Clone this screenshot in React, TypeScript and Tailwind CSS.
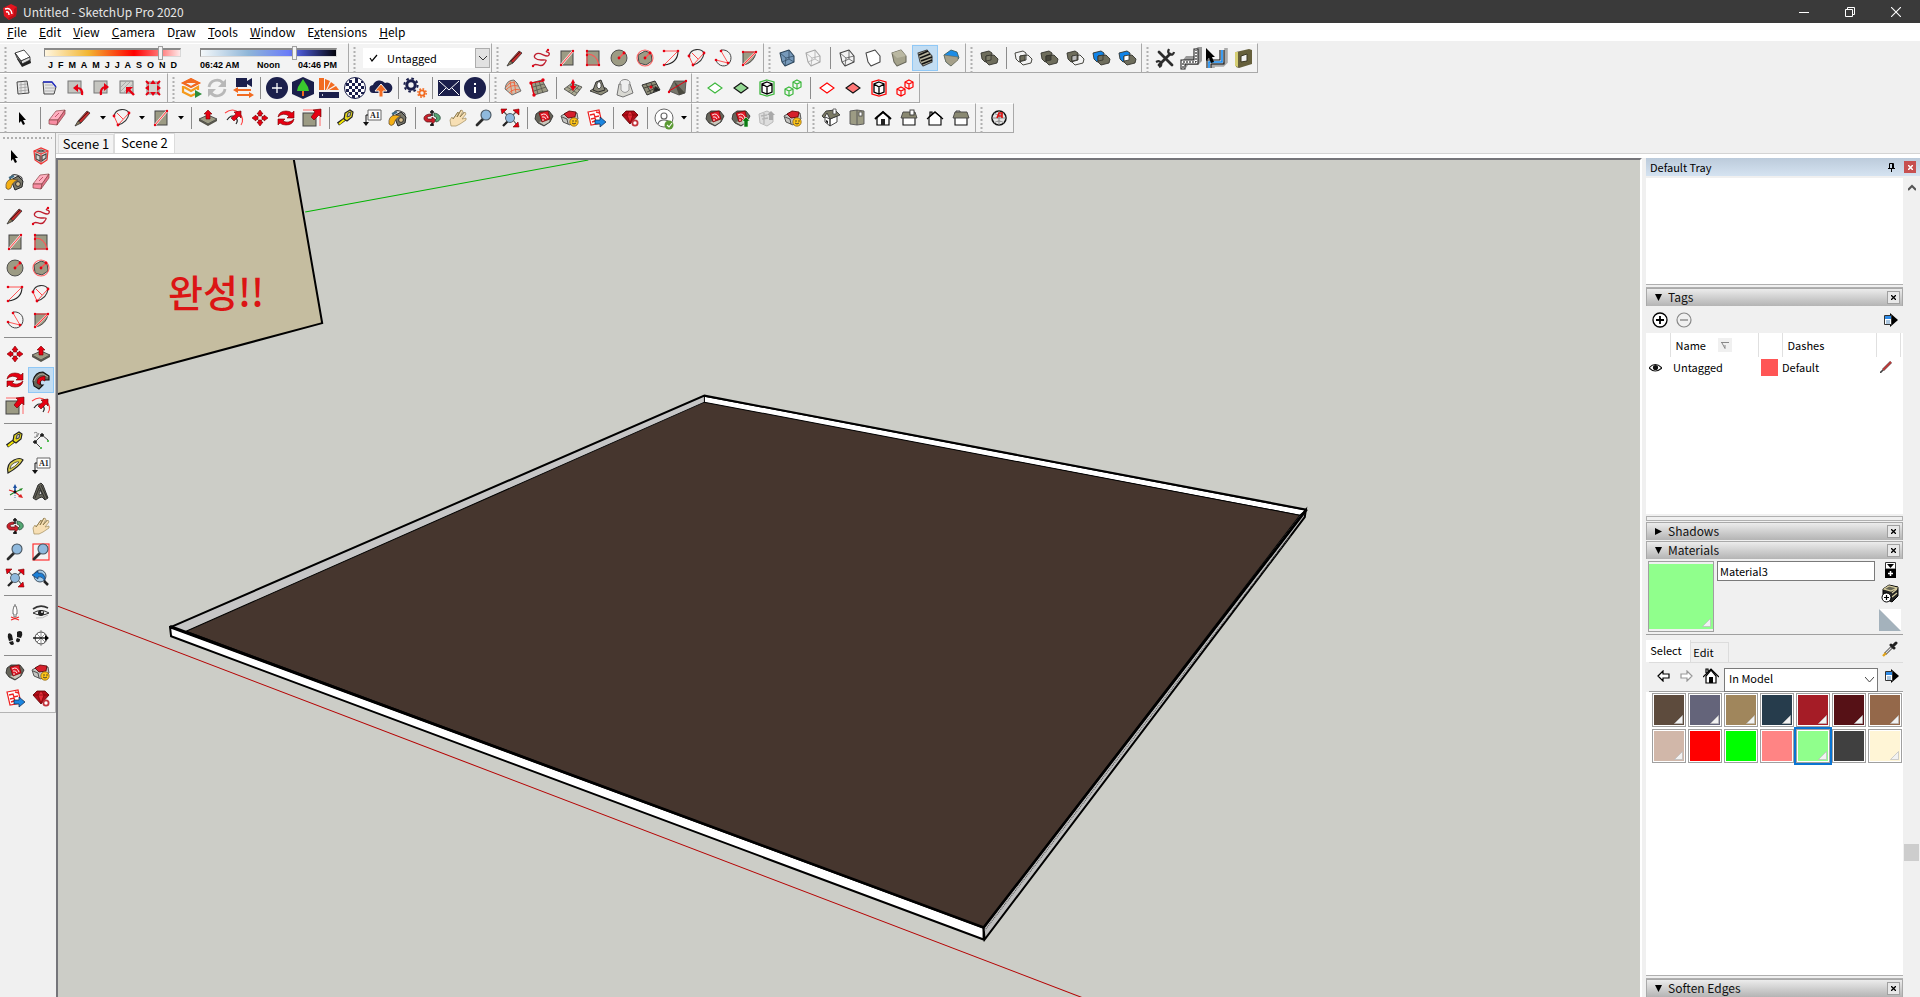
import React from 'react'

const TAUPE = '#9c9b84'
const DARK = '#33332c'
const RED = '#e60012'
const NAVY = '#1b1f4b'
const ORANGE = '#f26b21'

const dots = (points: number[][], r = 1.2) =>
  points.map(([x, y], index) => <circle key={index} cx={x} cy={y} r={r} fill={RED} />)

const styleCube = (fill: string, stroke: string, wire = false) => (
  <>
    <path d="M3 5 12 2 17 8 17 14 8 18 5 14Z" fill={fill} stroke={stroke} strokeWidth="1.1" strokeLinejoin="round" />
    {wire && <path d="M3 5 9 10 17 8M9 10 8 18M5 14 12 11 17 14M12 2 12 11" fill="none" stroke={stroke} strokeWidth="0.7" />}
  </>
)

const solids = (back: string, front: string, inner: string) => (
  <>
    <path d="M2 5 10 3 13 5 13 12 6 14 3 11Z" fill={back} stroke={DARK} strokeWidth="0.9" />
    <path d="M7 8 15 7 19 11 18 15 10 17 7 14Z" fill={front} stroke={DARK} strokeWidth="0.9" />
    <path d="M7 8 12 7 12 12 7 13Z" fill={inner} stroke={DARK} strokeWidth="0.8" />
  </>
)

const ringCube = (color: string) => (
  <>
    <path d="M10 2 17 4V16L10 18 3 16V4Z" fill="none" stroke={color} strokeWidth="1.3" />
    <path d="M10 4 15 6V14L10 16 5 14V6ZM5 6 10 9 15 6M10 9V16" fill="#fff" stroke="#000" strokeWidth="1.3" />
  </>
)

const twinCubes = (color: string) => (
  <g fill="none" stroke={color} strokeWidth="1.2">
    <path d="M6 9 10 11V16L6 18 2 16V11ZM2 11 6 13 10 11M6 13V18" />
    <path d="M14 2 18 4V9L14 11 10 9V4ZM10 4 14 6 18 4M14 6V11" />
  </g>
)

const warehouse = (
  <>
    <path d="M2 6 6 3 15 3 19 8 16 14 10 18 4 15 1 11Z" fill="#66655a" stroke="#222" strokeWidth="0.8" />
    <path d="M5 14 9 13 16 11 15 14 10 17Z" fill="#c9c8bd" />
    <path d="M5 5 14 3 16 11 8 14Z" fill="#e01b28" stroke="#700" strokeWidth="0.7" />
    <path d="M7 7Q12 4 14 10M8 9Q11 8 12 11M9 11V13" fill="none" stroke="#fff" strokeWidth="0.9" />
  </>
)

const components = (
  <>
    <path d="M1 8 6 5 17 5 18 11 10 17 3 14Z" fill="#c4c4c0" stroke="#333" strokeWidth="0.8" />
    <path d="M4 6 9 3 16 4 15 9 8 10Z" fill="#d6202c" stroke="#500" strokeWidth="0.8" />
    <path d="M2 9 7 11 8 16" fill="none" stroke="#333" strokeWidth="0.8" />
    <circle cx="14" cy="14" r="4.2" fill="#ffc61a" stroke="#805500" strokeWidth="0.7" />
    <path d="M12 15Q14 17 16 15" fill="none" stroke="#333" strokeWidth="0.9" />
    <circle cx="13" cy="13" r="0.7" fill="#222" />
    <circle cx="16" cy="13" r="0.7" fill="#222" />
  </>
)

const magnifier = (
  <>
    <path d="M9 11 3 17" stroke="#2b2b2b" strokeWidth="2.8" strokeLinecap="round" />
    <circle cx="12" cy="7" r="5" fill="#8fb9dd" stroke="#46535e" strokeWidth="1.1" />
  </>
)

const shed = (
  <path d="M4 10V17H16V10" fill="#fff" stroke="#111" strokeWidth="1.1" />
)

const icons: Record<string, React.ReactNode> = {
  shadow: (
    <>
      <path d="M4 11 9 19 18 15 17 10Z" fill="#222" />
      <path d="M2 5 11 2 17 9 8 13Z" fill="#fff" stroke="#333" strokeWidth="0.9" />
      <path d="M8 13 17 9V12L9 16Z" fill="#ddd" stroke="#222" strokeWidth="0.7" />
      <path d="M2 5 8 13 9 16 4 10Z" fill="#888" stroke="#222" strokeWidth="0.7" />
    </>
  ),
  select: <path d="M6 4V15L8 13 10 17 12 16 10 12H13Z" fill="#000" />,
  pencil: (
    <>
      <path d="M5 13 14 3 17 5 8 15Z" fill="#c42a2a" stroke="#333" strokeWidth="0.8" />
      <path d="M5 13 8 15 2 18Z" fill="#8d7b5a" stroke="#333" strokeWidth="0.8" />
      <path d="M6 13 15 4" stroke="#5a1212" strokeWidth="1" />
    </>
  ),
  freehand: (
    <>
      <path d="M2 18C5 13 9 21 13 16S15 12 10 12 1 9 5 6 16 11 18 7 12 5 17 2" fill="none" stroke="#bf1e2e" strokeWidth="1.4" />
      {dots([[2, 18], [17, 2]])}
    </>
  ),
  rectangle: (
    <>
      <rect x="4" y="3" width="12" height="14" fill={TAUPE} stroke="#444" />
      <path d="M4 17 16 3" stroke="#fff" strokeWidth="2.2" />
      <path d="M4 17 16 3" stroke="#f44" strokeWidth="1.1" />
      {dots([[4, 17], [16, 3]])}
    </>
  ),
  rotated: (
    <>
      <rect x="4" y="3" width="12" height="14" fill={TAUPE} stroke="#444" />
      <path d="M4 3V17H16M4 6Q14 6 16 17" fill="none" stroke="#f55" strokeWidth="1.2" />
      {dots([[4, 3], [4, 7], [4, 17], [16, 17]])}
    </>
  ),
  circle: (
    <>
      <circle cx="10" cy="10" r="8" fill={TAUPE} stroke="#444" strokeWidth="0.9" />
      <path d="M10 10 15 5" stroke="#f55" strokeWidth="1.6" />
      {dots([[10, 10], [15, 5]], 1.4)}
    </>
  ),
  polygon: (
    <>
      <path d="M3 7 10 3 16 5 17 13 11 17 4 15Z" fill={TAUPE} stroke="#444" />
      <circle cx="10" cy="10" r="8" fill="none" stroke="#f66" strokeWidth="1.1" />
      <path d="M10 10 15 5" stroke="#f55" strokeWidth="1.4" />
      {dots([[10, 10], [15, 5]], 1.4)}
    </>
  ),
  arc2: (
    <>
      <path d="M17 3C17 11 12 16 3 17" fill="none" stroke="#222" strokeWidth="1.1" />
      <path d="M3 3H17L3 17" fill="none" stroke="#f55" strokeWidth="1" />
      {dots([[3, 3], [17, 3], [3, 17]], 1.3)}
    </>
  ),
  arc: (
    <>
      <path d="M2 8C4 0 14 0 17 5M17 5Q16 14 6 17" fill="none" stroke="#333" strokeWidth="1.1" />
      <path d="M2 8 6 17 17 5M5 5 11 11" fill="none" stroke="#f44" strokeWidth="1" />
      {dots([[2, 8], [6, 17], [17, 5]], 1.4)}
    </>
  ),
  arc3: (
    <>
      <path d="M8 2C16 1 20 8 17 14S5 19 3 12" fill="none" stroke="#444" strokeWidth="1" />
      <path d="M8 3 15 15 3 12" fill="none" stroke="#f44" strokeWidth="0.9" />
      {dots([[8, 3], [3, 12], [15, 15]], 1.3)}
    </>
  ),
  pie: (
    <>
      <path d="M4 4H17C16 11 11 16 4 17Z" fill={TAUPE} stroke="#444" />
      <path d="M4 17 17 4" stroke="#fff" strokeWidth="2.2" />
      <path d="M4 4H17L4 17" fill="none" stroke="#f44" strokeWidth="1.1" />
      {dots([[4, 4], [17, 4], [4, 17]])}
    </>
  ),
  xray: styleCube('#7699ba', '#2b4459', true),
  backedges: styleCube('#f4f4f4', '#a5a5a5', true),
  wireframe: styleCube('none', '#444', true),
  hidden: styleCube('#fff', '#444'),
  shaded: (
    <>
      {styleCube('#a5a38c', '#6a695c')}
      <path d="M3 5 12 2 17 8 8 10Z" fill="#bab8a2" />
    </>
  ),
  textured: (
    <>
      {styleCube('#b5b29c', '#444')}
      <path d="M4 7 13 3M5 10 15 6M6 13 17 9M7 16 17 12" stroke="#111" strokeWidth="1.6" />
    </>
  ),
  monochrome: (
    <>
      <path d="M3 7 10 2 16 4 18 10 10 18 5 14Z" fill="#1b8ce6" stroke="#355" strokeWidth="0.8" />
      <path d="M3 7 17 9 17 12 10 18 5 14Z" fill="#a5a08a" stroke="#665" strokeWidth="0.6" />
    </>
  ),
  outerShell: solids('#6e6d5c', '#6e6d5c', '#7c7b68'),
  intersect: solids('none', 'none', '#6e6d5c'),
  union: solids('#6e6d5c', '#6e6d5c', '#46453a'),
  subtract: solids('#6e6d5c', 'none', '#bbb'),
  trim: solids('#1184e8', '#6e6d5c', '#6e6d5c'),
  split: solids('#1184e8', '#6e6d5c', '#fff'),
  wrench: (
    <>
      <path d="M4 4 17 17M4 17 15 6" stroke="#2c2c2c" strokeWidth="2.8" strokeLinecap="round" />
      <path d="M14 1Q12 5 15 6 18 8 19 4M1 14Q5 12 6 15 7 18 4 19" fill="none" stroke="#2c2c2c" strokeWidth="2.2" />
    </>
  ),
  road: (
    <>
      <path d="M2 12 5 8H13V2L17-1H21V13L17 17H7L5 20Z" fill="#999" />
      <path d="M0 21V12H13V1H17V16H4V21Z" fill="#fff" stroke="#222" strokeWidth="1.1" />
      <path d="M2 20V14H15V2" fill="none" stroke="#000" strokeDasharray="2 1" />
    </>
  ),
  pathCursor: (
    <>
      <path d="M19 0V14L16 17H6V20" fill="none" stroke="#aaa" strokeWidth="3.6" />
      <path d="M0 20V12H13V2M4 20V16H17V2" fill="none" stroke="#111" strokeWidth="1.1" />
      <path d="M2 20V14H15V2" fill="none" stroke="#1188f0" strokeWidth="1.6" />
      <path d="M-1 0V13L2 10 4 15 7 14 5 9H8Z" fill="#000" />
    </>
  ),
  frame: (
    <>
      <path d="M3 4 16 1 19 2V16L6 20 3 19Z" fill="#66603c" />
      <path d="M2 4 5 4V19L2 18Z" fill="#d6cf75" />
      <path d="M8 8 14 6V13L8 14Z" fill="#f3f3f3" stroke="#3a3722" />
    </>
  ),
  sheet: (
    <>
      <path d="M4 4 14 3 16 15 5 16Z" fill="#e6e6e6" stroke="#444" />
      <path d="M6 7 14 6M6 10 15 9M6 13 15 12M8 4V16M12 4V15" stroke="#999" strokeWidth="0.7" />
    </>
  ),
  sheetBlue: (
    <>
      <path d="M4 4H13L17 9 15 16 5 16Z" fill="#e6e6e6" stroke="#444" />
      <path d="M4 4H13L17 9" fill="none" stroke="#2630c8" strokeWidth="1.3" />
      <path d="M6 7H14M6 10H16M6 13H15" stroke="#999" strokeWidth="0.7" />
    </>
  ),
  turnLeft: (
    <>
      <rect x="3" y="3" width="13" height="12" fill="#c5c5c0" stroke="#777" />
      <path d="M17 17Q18 10 12 10" fill="none" stroke={RED} strokeWidth="2.2" />
      <path d="M13 6V14L8 10Z" fill={RED} />
    </>
  ),
  turnRight: (
    <>
      <rect x="3" y="3" width="13" height="12" fill="#c5c5c0" stroke="#777" />
      <path d="M10 17Q9 10 14 9" fill="none" stroke={RED} strokeWidth="2.2" />
      <path d="M13 5V13L18 9Z" fill={RED} />
    </>
  ),
  cornerArrow: (
    <>
      <rect x="3" y="3" width="13" height="12" fill="#d5d5d0" stroke="#777" />
      <path d="M4 13 13 4M6 15 16 6M4 9 9 4" stroke="#aaa" />
      <path d="M17 17 12 12" stroke={RED} strokeWidth="2.4" />
      <path d="M9 9H16L9 16Z" fill={RED} />
    </>
  ),
  spread: (
    <>
      <rect x="4" y="4" width="12" height="12" fill="#d0d0cb" stroke="#888" />
      <path d="M10 2 13 6H7ZM10 18 7 14H13ZM2 10 6 7V13ZM18 10 14 7V13Z" fill={RED} />
      <path d="M3 3 6 6M17 3 14 6M3 17 6 14M17 17 14 14" stroke={RED} strokeWidth="2" />
    </>
  ),
  academy: (
    <>
      <path d="M10 0 20 5 10 10 0 5ZM5 5H15L10 8Z" fill={ORANGE} fillRule="evenodd" />
      <path d="M10 1 18 5 10 9 2 5Z" fill="none" stroke={ORANGE} strokeWidth="1.6" />
      <path d="M2 8V14L10 18 14 16M3 9 10 13 17 9V12" fill="none" stroke="#f49a1c" strokeWidth="2.2" />
      <path d="M14 12 21 16 14 20Z" fill="#2c8c3a" />
    </>
  ),
  refresh: (
    <>
      <path d="M2 9A8 8 0 0 1 16 5M18 11A8 8 0 0 1 4 15" fill="none" stroke="#b8b8b8" strokeWidth="2.8" />
      <path d="M19 1V9H11ZM1 19V11H9Z" fill="#b8b8b8" />
    </>
  ),
  camera: (
    <>
      <path d="M3 0H14V3L19 0V9L14 6V9H3Z" fill={NAVY} />
      <path d="M0 12 5 9V11H18V13H5V15ZM21 17 16 14V16H4V18H16V20Z" fill={ORANGE} />
    </>
  ),
  plus: (
    <>
      <circle cx="10" cy="10" r="11" fill={NAVY} />
      <path d="M10 5V15M5 10H15" stroke="#fff" strokeWidth="1.3" />
    </>
  ),
  tree: (
    <>
      <path d="M10-1 21 4V16L10 21-1 16V4Z" fill={NAVY} />
      <path d="M10 1 15 9 16 13H4L5 9Z" fill="#3ac92d" />
      <path d="M9 13H11V18H9Z" fill={ORANGE} />
    </>
  ),
  palette: (
    <>
      <path d="M0 0H5V12H0ZM6 1 11 3 7 12H6ZM12 4 16 7 8 12ZM17 8 20 12H10Z" fill={ORANGE} />
      <path d="M0 14H20V20H0Z" fill={NAVY} />
      <path d="M3 17H4" stroke="#fff" strokeWidth="1.5" />
    </>
  ),
  globe: (
    <>
      <circle cx="10" cy="10" r="10.5" fill="#fff" stroke={NAVY} />
      <path d="M4 2H7V5H4ZM10 0H13V2H10ZM7 5H10V8H7ZM13 5H16V8H13ZM10 2H13V5H10ZM1 5H4V8H1ZM4 8H7V11H4ZM10 8H13V11H10ZM16 8H19V11H16ZM1 11H4V14H1ZM7 11H10V14H7ZM13 11H16V14H13ZM4 14H7V17H4ZM10 14H13V17H10ZM16 14H19V16H16ZM7 17H10V20H7ZM13 17H15V19H13ZM16 3H18V5H16Z" fill={NAVY} />
    </>
  ),
  cloud: (
    <>
      <path d="M3 15A4 4 0 0 1 2 7 7 7 0 0 1 14 5 5 5 0 0 1 18 15Z" fill={NAVY} />
      <path d="M10 6 16 13H12V19H8V13H4Z" fill={ORANGE} stroke="#f3f3f3" />
    </>
  ),
  gears: (
    <>
      <circle cx="6" cy="7" r="4.2" fill="none" stroke={NAVY} strokeWidth="3" />
      <circle cx="6" cy="7" r="6.6" fill="none" stroke={NAVY} strokeWidth="2" strokeDasharray="2.6 2.6" />
      <circle cx="17" cy="15" r="2.6" fill="none" stroke={ORANGE} strokeWidth="1.8" />
      <circle cx="17" cy="15" r="4.2" fill="none" stroke={ORANGE} strokeWidth="1.5" strokeDasharray="1.7 1.6" />
    </>
  ),
  mail: (
    <>
      <path d="M-1 2H21V18H-1Z" fill={NAVY} />
      <path d="M0 3 10 12 20 3M0 17 7 10M20 17 13 10" fill="none" stroke="#fff" strokeWidth="1" />
    </>
  ),
  info: (
    <>
      <circle cx="10" cy="10" r="11" fill={NAVY} />
      <path d="M10 9V15M10 5V7" stroke="#fff" strokeWidth="2" />
    </>
  ),
  contours: (
    <>
      <path d="M2 11Q3 2 11 2L14 5 18 13 9 17Z" fill="#cfc0ae" stroke="#555" strokeWidth="0.8" />
      <path d="M3 9Q7 3 12 5M3 12Q8 6 15 8M6 15Q11 10 17 12M7 3 9 16M11 3 13 15" fill="none" stroke="#f0613a" strokeWidth="0.9" />
    </>
  ),
  scratch: (
    <>
      <path d="M2 5 13 2 19 13 5 17Z" fill={TAUPE} stroke="#444" strokeWidth="0.8" />
      <path d="M4 9 15 6M5 13 17 9M6 4 9 16M10 3 14 15" stroke="#55544a" strokeWidth="0.8" />
      <path d="M5 17 2 5 14 3" fill="none" stroke={RED} strokeWidth="1.2" />
      {dots([[2, 5], [14, 2], [5, 17]], 1.7)}
    </>
  ),
  smoove: (
    <>
      <path d="M1 11 9 5 19 9 12 18Z" fill="#aaa992" stroke="#444" strokeWidth="0.8" />
      <path d="M4 9 14 15M7 7 17 12M5 14 14 7M8 16 16 8" stroke="#55544a" strokeWidth="0.7" />
      <path d="M10 1 12 5H11V8H13L10 13 7 8H9V5H8Z" fill={RED} />
    </>
  ),
  stamp: (
    <>
      <path d="M1 13 7 9 17 10 19 13 12 17Z" fill="#8e8d79" stroke="#222" strokeWidth="0.8" />
      <path d="M4 12 7 4 12 2 16 12 9 14Z" fill="#8a897a" stroke="#222" strokeWidth="0.9" />
      <path d="M8 9V6L10 3 12 6V9L10 11Z" fill="#fff" stroke="#222" strokeWidth="0.7" />
    </>
  ),
  drape: (
    <>
      <path d="M2 17 4 6H15L18 15 8 19Z" fill="#d8d8d2" stroke="#666" strokeWidth="0.9" />
      <ellipse cx="10" cy="5" rx="5" ry="3.5" fill="#eee" stroke="#888" />
      <path d="M6 6 6 12Q10 17 14 12V6" fill="#eee" stroke="#999" />
    </>
  ),
  detail: (
    <>
      <path d="M1 7 14 3 19 12 6 17Z" fill="#8e8d79" stroke="#222" strokeWidth="0.9" />
      <path d="M14 8 19 12 12 14Z" fill="#222" />
      <path d="M5 6 10 15M3 10 16 6M6 14 17 9M10 5 14 13" stroke="#33332c" strokeWidth="0.8" />
      {dots([[10, 9]], 1.5)}
    </>
  ),
  flip: (
    <>
      <path d="M2 13 7 3 19 3 18 15 12 17Z" fill="#77766a" stroke="#444" strokeWidth="0.8" />
      <path d="M7 3 18 15 12 17Z" fill="#4b4a40" />
      <path d="M2 13 19 3" stroke={RED} strokeWidth="1" />
      {dots([[2, 14], [19, 3]])}
    </>
  ),
  greenOpen: <path d="M3 10 10 5 17 10 10 15Z" fill="#fff" stroke="#3cb83c" strokeWidth="1.1" />,
  greenFill: <path d="M3 10 10 5 17 10 10 15Z" fill="#93d893" stroke="#111" strokeWidth="1.1" />,
  greenCube: ringCube('#3cb83c'),
  greenTwin: twinCubes('#3cb83c'),
  redOpen: <path d="M3 10 10 5 17 10 10 15Z" fill="#fff" stroke="#f00" strokeWidth="1.1" />,
  redFill: <path d="M3 10 10 5 17 10 10 15Z" fill="#f77" stroke="#111" strokeWidth="1.1" />,
  redCube: ringCube('#f00'),
  redTwin: twinCubes('#f00'),
  eraser: (
    <>
      <path d="M2 12 9 3 18 2 11 12Z" fill="#ffb0c0" stroke="#844" strokeWidth="0.7" />
      <path d="M2 12 11 12 10 17 2 16Z" fill="#f88da3" stroke="#844" strokeWidth="0.7" />
      <path d="M11 12 18 2 18 6 10 17Z" fill="#e57189" stroke="#844" strokeWidth="0.7" />
      <path d="M8 9 12 5" stroke="#c0566d" />
    </>
  ),
  pushpull: (
    <>
      <path d="M1 11 10 7 19 11 10 16Z" fill={TAUPE} stroke="#333" strokeWidth="0.8" />
      <path d="M1 11V13L10 18 19 13V11L10 16Z" fill="#55544a" />
      <path d="M10 2 14 6H12V11H8V6H6Z" fill={RED} stroke="#700" strokeWidth="0.6" />
    </>
  ),
  offset: (
    <>
      <path d="M1 5Q9-1 15 5T17 17" fill="none" stroke="#f44" strokeWidth="1.1" />
      <path d="M3 12Q7 6 11 9T12 16" fill="none" stroke="#222" strokeWidth="1.2" />
      <path d="M17 3V10L15 8 10 13 7 10 12 6 10 4Z" fill={RED} stroke="#600" strokeWidth="0.6" />
    </>
  ),
  move: (
    <path d="M10 2 13 6H11.5V8H8.5V6H7ZM10 18 7 14H8.5V12H11.5V14H13ZM2 10 6 7V8.5H8V11.5H6V13ZM18 10 14 13V11.5H12V8.5H14V7Z" fill={RED} stroke="#700" strokeWidth="0.6" />
  ),
  rotate: (
    <g fill={RED} stroke="#700" strokeWidth="0.6">
      <path d="M2 9Q3 3 10 3 14 3 16 5L18 3V10H11L13 8Q7 4 2 9Z" />
      <path d="M18 11Q17 17 10 17 6 17 4 15L2 17V11H9L7 13Q13 16 18 11Z" />
    </g>
  ),
  scale: (
    <>
      <path d="M1 2H18V18" fill="none" stroke="#f66" />
      <rect x="1" y="5" width="13" height="13" fill={TAUPE} stroke="#444" />
      <path d="M19 1V9L17 7 12 12 9 9 13 4 11 2Z" fill={RED} stroke="#600" strokeWidth="0.6" />
    </>
  ),
  follow: (
    <>
      <path d="M2 11Q4 2 12 2L18 6 18 10 14 10 11 9Q8 11 10 15L12 15 8 19 3 16Z" fill="#66655a" stroke="#111" strokeWidth="1.1" />
      <path d="M3 11Q6 4 12 4L17 7" fill="none" stroke="#b9b8a8" strokeWidth="0.9" />
      <path d="M14 6V11L11 10Q8 12 9 15L6 13Q6 8 10 7Z" fill={RED} stroke="#600" strokeWidth="0.6" />
    </>
  ),
  tape: (
    <>
      <path d="M2 16 9 11" stroke="#222" strokeWidth="3.6" />
      <path d="M3 16 9 11" stroke="#f2e500" strokeWidth="2" />
      <path d="M8 11 9 5 14 2 17 4 16 9 11 13Z" fill="#e7d91a" stroke="#222" strokeWidth="1.2" />
      <path d="M11 9 12 5 15 4 14 8Z" fill="#bbb" stroke="#444" />
    </>
  ),
  label: (
    <>
      <path d="M6 2H19V12H6Z" fill="#fff" stroke="#666" />
      <path d="M6 7H4V15" fill="none" stroke="#111" />
      <path d="M1 14H7L4 18Z" fill="#111" />
      <text x="8" y="10" fontSize="8" fontFamily="Liberation Serif, serif" fontWeight="bold" fill="#222">A1</text>
    </>
  ),
  paint: (
    <>
      <path d="M6 8 13 4 18 9 17 15 10 18Z" fill="#77766a" stroke="#222" strokeWidth="1" />
      <path d="M5 8Q6 1 12 3T17 8" fill="none" stroke="#444" strokeWidth="1.2" />
      <path d="M1 16Q0 8 7 7L13 8Q7 10 6 16Q3 19 1 16Z" fill="#f5b014" stroke="#543" strokeWidth="0.7" />
      <circle cx="13" cy="12" r="2.4" fill="#d9c08f" stroke="#222" strokeWidth="0.9" />
      <path d="M4 6 9 4" stroke="#3f6b84" strokeWidth="2.3" />
    </>
  ),
  orbit: (
    <>
      <path d="M9 6C1 6 0 12 5 14H10V17L14 12 10 9V11H6Q3 9 9 8Z" fill="#c9202b" stroke="#511" strokeWidth="0.7" />
      <path d="M12 5C20 6 20 13 14 14L13 12Q17 10 12 8Z" fill="#54a873" stroke="#243" strokeWidth="0.8" />
      <path d="M10 2V8M10 15V18M8 4H12M8 17H12" stroke="#111" strokeWidth="1.5" />
    </>
  ),
  hand: (
    <>
      <path d="M3 18 2 12 4 9 5 11 10 4 11 5 9 9 13 2 15 3 12 9 17 4 18 6 14 11 18 10V12L12 16 8 18Z" fill="#f7dfb4" stroke="#a08c5c" strokeWidth="0.7" />
      <path d="M5 11 10 4M9 9 13 2M12 9 16 4" fill="none" stroke="#7c6a3c" strokeWidth="0.7" />
    </>
  ),
  zoom: magnifier,
  zoomWindow: (
    <>
      <rect x="2" y="2" width="16" height="16" fill="none" stroke="#f33" strokeWidth="1.2" />
      {magnifier}
    </>
  ),
  extents: (
    <>
      <path d="M13 12 17 17M7 7 3 3M13 7 17 3" stroke="#555" strokeWidth="1.2" />
      <path d="M8 13 3 18" stroke="#222" strokeWidth="2.3" />
      <circle cx="10" cy="10" r="4.5" fill="#8fb9dd" stroke="#56636e" />
      <path d="M1 1H7L2 6ZM19 1V7L13 2ZM19 19H13L18 14Z" fill={RED} stroke="#700" strokeWidth="0.6" />
    </>
  ),
  previous: (
    <>
      <circle cx="9" cy="8" r="6" fill="#a5cbe8" stroke="#456" />
      <path d="M1 7 7 3V5Q15 4 14 14 12 8 7 9V11Z" fill="#1b7fd6" stroke="#124" strokeWidth="0.6" />
      <path d="M13 13 17 17" stroke="#222" strokeWidth="2.5" />
    </>
  ),
  warehouse,
  components,
  sendLayout: (
    <>
      <path d="M2 4 13 2 16 15 5 17Z" fill="#fff" stroke="#e22" strokeWidth="1.2" />
      <path d="M4 7 8 6 9 9 13 8M5 11 9 10 10 14M10 4 14 5M6 14 9 13" fill="none" stroke="#e22" strokeWidth="1.4" />
      <path d="M9 12H14V9L20 14 14 19V16H9Z" fill="#1c86e0" stroke="#124" strokeWidth="0.7" />
    </>
  ),
  ruby: (
    <>
      <path d="M2 7 6 3H14L18 7 10 16Z" fill="#b20d1a" stroke="#500" strokeWidth="0.8" />
      <path d="M2 7H18M7 7 10 15 13 7 10 3Z" fill="#e42d39" stroke="#700" strokeWidth="0.6" />
      <circle cx="15" cy="15" r="2.6" fill="#fff" stroke="#c2333c" strokeWidth="1.8" />
    </>
  ),
  account: (
    <>
      <circle cx="10" cy="10" r="9" fill="#fff" stroke="#666" />
      <circle cx="10" cy="8" r="3" fill="none" stroke="#666" strokeWidth="1.1" />
      <path d="M4 16Q5 12 10 12T16 16" fill="none" stroke="#666" strokeWidth="1.1" />
      <circle cx="15" cy="17" r="4.5" fill="#5b9a34" />
      <path d="M13 17 15 19 18 15" fill="none" stroke="#fff" strokeWidth="1.1" />
    </>
  ),
  share: (
    <>
      {warehouse}
      <path d="M15 9 19 13H17V19H13V13H11Z" fill="#0a7a12" stroke="#dfd" strokeWidth="0.6" />
    </>
  ),
  shareGrey: (
    <>
      <path d="M2 6 10 3 16 6V14L10 18 3 15Z" fill="#ddd" stroke="#bbb" />
      <path d="M4 8 10 7M5 11 11 10M7 5V16" stroke="#b5b5b5" strokeWidth="1.3" />
      <path d="M14 3 18 7H16V12H12V7H10Z" fill="#aaa" />
    </>
  ),
  isoHouse: (
    <>
      <path d="M4 9V14L9 18V11ZM9 18 16 14V8L9 11Z" fill="#fff" stroke="#333" strokeWidth="0.9" />
      <path d="M1 8 5 3 14 2 19 7 9 11 6 5 3 10Z" fill="#7b7a64" stroke="#333" strokeWidth="0.9" />
      <path d="M12 1H15V6H12Z" fill="#fff" stroke="#444" strokeWidth="0.8" />
      <path d="M5 12 7 13V16L5 14Z" fill="#222" />
    </>
  ),
  topHouse: (
    <>
      <path d="M3 3 10 2 17 3V16L10 17 3 16Z" fill={TAUPE} stroke="#555" strokeWidth="0.9" />
      <path d="M10 2V17" stroke="#555" strokeWidth="0.9" />
      <rect x="12" y="4" width="3" height="4" fill="#fff" stroke="#444" strokeWidth="0.8" />
    </>
  ),
  frontHouse: (
    <>
      <path d="M4 9V17H16V9L10 4Z" fill="#fff" stroke="#000" strokeWidth="1.2" />
      <path d="M2 11 10 4 18 11" fill="none" stroke="#000" strokeWidth="2" />
      <path d="M8 11H12V17H8Z" fill="#222" />
    </>
  ),
  rightHouse: (
    <>
      {shed}
      <path d="M2 10 4 4H16L18 10Z" fill="#8a8972" stroke="#444" strokeWidth="0.9" />
      <rect x="11" y="2" width="4" height="5" fill="#fff" stroke="#333" strokeWidth="0.9" />
    </>
  ),
  backHouse: (
    <>
      <path d="M4 9V17H16V9L10 4Z" fill="#fff" stroke="#000" strokeWidth="1.1" />
      <path d="M2 11 10 4 18 11M5 8V4H7V6" fill="none" stroke="#000" strokeWidth="1.2" />
    </>
  ),
  leftHouse: (
    <>
      {shed}
      <path d="M2 10 4 4H16L18 10Z" fill="#8a8972" stroke="#444" strokeWidth="0.9" />
      <path d="M5 4V3H9V4" fill="none" stroke="#444" />
    </>
  ),
  locator: (
    <>
      <circle cx="10" cy="10" r="7" fill="#e4e4e4" stroke="#111" strokeWidth="1.6" />
      <path d="M3 10H17M10 3V17M5 5Q10 9 15 5M5 15Q10 11 15 15" fill="none" stroke="#888" />
      <path d="M8 10 10 5H13V10M9 8H13" fill="none" stroke="#d11" strokeWidth="1.6" />
    </>
  ),
  makeComponent: (
    <>
      <path d="M3 5 10 2 17 5 16 14 10 18 4 14Z" fill="#d4d4cf" stroke="#e33" strokeWidth="1.2" />
      <path d="M3 5 10 8 17 5M10 8V18" fill="none" stroke="#e33" strokeWidth="1.1" />
      <path d="M5 8 9 10V15L5 13ZM11 10 15 8V12L11 15ZM7 5 10 4 13 5 10 6Z" fill="none" stroke="#444" strokeWidth="1.1" />
    </>
  ),
  dimension: (
    <>
      <path d="M4 12 11 5M4 12 9 17M11 5 17 10" fill="none" stroke="#444" strokeWidth="1" />
      <path d="M2 12H6M4 10V14M9 5H13M11 3V7" stroke="#111" strokeWidth="1.3" />
      <path d="M3 3Q7 1 6 5T3 7M8 3 6 7" fill="none" stroke="#777" strokeWidth="0.9" />
      <circle cx="10" cy="18" r="1" fill="#2a2" />
      <circle cx="17" cy="11" r="1" fill="#2a2" />
    </>
  ),
  protractor: (
    <>
      <path d="M3 17Q1 8 9 4 15 1 18 4Q14 11 3 17Z" fill="#d8cc48" stroke="#222" strokeWidth="1.2" />
      <path d="M5 13Q5 9 9 7 13 5 14 6 10 11 5 13Z" fill="#f2f2f2" stroke="#443" strokeWidth="0.8" />
    </>
  ),
  axes: (
    <>
      <path d="M10 10V5" stroke="#1a4fa0" strokeWidth="1.6" />
      <path d="M10 2 12 6H8Z" fill="#1a4fa0" />
      <path d="M10 10 15 8M5 13 10 10" stroke="#282" strokeWidth="1.1" />
      <path d="M18 6 16 9 14 7Z" fill="#282" />
      <path d="M10 10 15 14M4 8 10 10" stroke="#d22" strokeWidth="1.1" />
      <path d="M18 16 13 15 16 12Z" fill="#d22" />
      <path d="M10 11V17" stroke="#58b" strokeDasharray="1 1" />
      <circle cx="10" cy="10" r="1.4" fill="#111" />
    </>
  ),
  text3d: (
    <>
      <path d="M2 16 7 3 10 1 12 3 17 16 14 18 11 15 8 16 5 18Z" fill="#66655a" stroke="#222" strokeWidth="0.9" />
      <path d="M8 13 9 8 11 12Z" fill="#ddd" stroke="#111" strokeWidth="0.6" />
      <path d="M8 4 14 17M10 3 16 16M4 16 8 6" stroke="#222" strokeWidth="0.8" />
    </>
  ),
  person: (
    <>
      <path d="M10 2V4M8 8 9 4H11L12 8V12H11V15H9V12H8Z" fill="#fff" stroke="#666" strokeWidth="0.9" />
      <path d="M6 18 14 15M6 15 14 18" stroke="#e22" strokeWidth="1.1" />
    </>
  ),
  eye: (
    <>
      <path d="M2 7Q9 2 17 6" fill="none" stroke="#333" strokeWidth="1.7" />
      <path d="M2 11Q10 6 18 11 10 15 2 11Z" fill="#eee" stroke="#333" strokeWidth="1" />
      <circle cx="10" cy="11" r="3" fill="#222" />
      <circle cx="11" cy="10" r="0.9" fill="#fff" />
      <path d="M5 16Q12 17 17 13" fill="none" stroke="#bbb" />
    </>
  ),
  walk: (
    <>
      <path d="M3 6Q5 4 7 7L8 12 4 13Q2 9 3 6ZM4 14 8 13 9 16Q7 18 5 16Z" fill="#1c1c1c" />
      <path d="M12 4Q15 2 17 4 18 7 16 10L12 9ZM12 10 15 11Q15 15 12 14 10 13 12 10Z" fill="#1c1c1c" />
    </>
  ),
  section: (
    <>
      <circle cx="10" cy="10" r="6" fill="#fff" stroke="#444" />
      <path d="M10 2V18M6 6 14 14M14 6 6 14" stroke="#777" strokeWidth="0.8" />
      <path d="M2 10H14" stroke="#000" strokeWidth="1.3" />
      <path d="M14 7 18 10 14 13Z" fill="#000" />
    </>
  ),
}

const Icon: React.FC<{ name: string }> = ({ name }) => (
  <svg viewBox="0 0 20 20" className="w-5 h-5 overflow-visible" aria-hidden="true">{icons[name]}</svg>
)

const Tool: React.FC<{ name: string; active?: boolean }> = ({ name, active }) => (
  <button
    type="button"
    aria-label={name}
    className={
      active
        ? 'flex items-center justify-center w-[26px] h-[26px] border border-[#90c8f6] bg-[#c2ddf3]'
        : 'flex items-center justify-center w-[26px] h-[26px]'
    }
  >
    <Icon name={name} />
  </button>
)

const Grip = () => (
  <span className="w-[10px] h-full flex justify-center py-[3px]">
    <svg className="w-[3px] h-[26px]" aria-hidden="true">
      <path d="M1.5 0V26" stroke="#b0b0b0" strokeWidth="2" strokeDasharray="2 2" />
    </svg>
  </span>
)

const Caret = () => (
  <button type="button" aria-label="More" className="w-[13px] h-[26px] flex items-center justify-center">
    <svg viewBox="0 0 6 4" className="w-[6px] h-1" aria-hidden="true"><path d="M0 0H6L3 3.5Z" fill="#000" /></svg>
  </button>
)

const Toolbar: React.FC<{ children: React.ReactNode }> = ({ children }) => (
  <div className="h-[30px] flex items-center pr-px bg-[#f3f3f3] border-r border-b border-[#a9a9a9] border-t border-t-white">
    <Grip />
    {children}
  </div>
)

// '|' is a divider, '^' a drop-down caret and a leading '*' marks the pressed tool
const ToolSet: React.FC<{ tools: string }> = ({ tools }) => (
  <Toolbar>
    {tools.split(' ').map((tool, index) => {
      if (tool === '|') {
        return <span key={index} className="w-2 h-[22px] flex justify-center"><span className="w-px bg-[#8c8c8c]" /></span>
      }
      if (tool === '^') {
        return <Caret key={index} />
      }
      return <Tool key={index} name={tool.replace('*', '')} active={tool.startsWith('*')} />
    })}
  </Toolbar>
)

const menus = [
  ['', 'F', 'ile'],
  ['', 'E', 'dit'],
  ['', 'V', 'iew'],
  ['', 'C', 'amera'],
  ['D', 'r', 'aw'],
  ['', 'T', 'ools'],
  ['', 'W', 'indow'],
  ['E', 'x', 'tensions'],
  ['', 'H', 'elp'],
]

const TitleBar = () => (
  <header className="h-[23px] shrink-0 flex items-center bg-[#3a3a3a] text-[#e6e6e6] pl-[3px]">
    <svg viewBox="0 0 14 16" className="w-[14px] h-4 mr-[6px]" aria-hidden="true">
      <path d="M0 4 8 0 14 3 13 12 6 16 1 12Z" fill="#e3151f" />
      <path d="M11 5 14 3 13 12 6 16 5 14 11 11Z" fill="#b80e17" />
      <path d="M2 5Q8 3 9 10M3 8Q6 7 6 11" fill="none" stroke="#fff" strokeWidth="1.4" />
    </svg>
    <h1 className="text-[12px] leading-[22px]">Untitled - SketchUp Pro 2020</h1>
    <div className="ml-auto flex pr-px">
      <button type="button" aria-label="Minimize" className="w-[46px] h-[22px] flex items-center justify-center">
        <svg viewBox="0 0 10 10" className="w-[10px] h-[10px]" aria-hidden="true"><path d="M0 5.5H10" stroke="#fff" /></svg>
      </button>
      <button type="button" aria-label="Restore" className="w-[46px] h-[22px] flex items-center justify-center">
        <svg viewBox="0 0 10 10" className="w-[10px] h-[10px]" aria-hidden="true"><path d="M.5 2.5H7.5V9.5H.5ZM2.5 2.5V.5H9.5V7.5H7.5" fill="none" stroke="#fff" /></svg>
      </button>
      <button type="button" aria-label="Close" className="w-[46px] h-[22px] flex items-center justify-center">
        <svg viewBox="0 0 10 10" className="w-[10px] h-[10px]" aria-hidden="true"><path d="M0 0 10 10M10 0 0 10" stroke="#fff" strokeWidth="1.1" /></svg>
      </button>
    </div>
  </header>
)

const sliderClass =
  'appearance-none w-[137px] h-[9px] block border border-[#d8d8d8] border-t-2 border-t-[#8a8a8a] border-l-[#8a8a8a] [&::-webkit-slider-thumb]:appearance-none [&::-webkit-slider-thumb]:w-[5px] [&::-webkit-slider-thumb]:h-[14px] [&::-webkit-slider-thumb]:bg-[#f3f3f3] [&::-webkit-slider-thumb]:border [&::-webkit-slider-thumb]:border-[#a0a0a0]'

const ShadowBar = () => (
  <Toolbar>
    <Tool name="shadow" />
    <div className="w-[137px] ml-2 pt-[2px] text-[9px] leading-[11px] font-bold text-black font-['Liberation_Sans',sans-serif]">
      <input
        type="range"
        aria-label="Date"
        defaultValue="87"
        className={`${sliderClass} [background-image:linear-gradient(to_right,#fff6e0,#f2b632_32%,#ff0000_66%,#ff8a8a_88%,#ffe8e8)]`}
      />
      <div className="flex justify-between px-1 pt-[3px]">
        {'JFMAMJJASOND'.split('').map((month, index) => <span key={index}>{month}</span>)}
      </div>
    </div>
    <div className="w-[137px] ml-[19px] mr-[10px] pt-[2px] text-[9px] leading-[11px] font-bold text-black font-['Liberation_Sans',sans-serif]">
      <input
        type="range"
        aria-label="Time"
        defaultValue="70"
        className={`${sliderClass} [background-image:linear-gradient(to_right,#f4f8fa,#8fb6d8_35%,#6a7cf8_65%,#4350c0_75%,#04040c)]`}
      />
      <div className="flex justify-between pt-[3px]">
        <span>06:42 AM</span>
        <span>Noon</span>
        <span>04:46 PM</span>
      </div>
    </div>
  </Toolbar>
)

const TagBar = () => (
  <Toolbar>
    <div className="grid w-[127px] h-5 ml-1 bg-white items-center">
      <select aria-label="Tag" className="col-start-1 row-start-1 appearance-none w-full h-5 pl-[24px] text-[11px] text-black">
        <option>Untagged</option>
      </select>
      <span className="col-start-1 row-start-1 flex items-center justify-between pl-[6px] pointer-events-none">
        <svg viewBox="0 0 9 8" className="w-[9px] h-2" aria-hidden="true"><path d="M1 4 3 7 8 1" fill="none" stroke="#000" strokeWidth="1.2" /></svg>
        <span className="w-[15px] h-5 flex items-center justify-center border border-[#adadad] bg-[#e1e1e1]">
          <svg viewBox="0 0 8 5" className="w-2 h-[5px]" aria-hidden="true"><path d="M0 0 4 4 8 0" fill="none" stroke="#333" /></svg>
        </span>
      </span>
    </div>
  </Toolbar>
)

const paletteGroups = [
  'select makeComponent paint eraser',
  'pencil freehand rectangle rotated circle polygon arc2 arc arc3 pie',
  'move pushpull rotate *follow scale offset',
  'tape dimension protractor label axes text3d',
  'orbit hand zoom zoomWindow extents previous',
  'person eye walk section',
  'warehouse components sendLayout ruby',
]

const Palette = () => (
  <aside className="w-14 shrink-0 bg-[#f0f0f0]">
    <div className="bg-[#f3f3f3] border-r border-b border-[#b4b4b4] pl-[2px]">
      <svg className="w-[50px] h-[10px] block" aria-hidden="true">
        <path d="M1 5H50" stroke="#b0b0b0" strokeWidth="2" strokeDasharray="2 2" />
      </svg>
      <div className="divide-y divide-[#8c8c8c]">
        {paletteGroups.map((group) => (
          <div key={group} className="w-12 ml-[2px] pt-[3px] pb-1 first:pt-0 last:pb-px">
            <div className="grid grid-cols-[26px_26px] -mx-[2px]">
              {group.split(' ').map((tool) => (
                <Tool key={tool} name={tool.replace('*', '')} active={tool.startsWith('*')} />
              ))}
            </div>
          </div>
        ))}
      </div>
    </div>
  </aside>
)

const Viewport = () => (
  <main className="flex-1 min-w-0 border-l-2 border-t-2 border-[#75757a] border-r-2 border-r-white bg-[#cccdc7]">
    <svg viewBox="58 160 1581 837" preserveAspectRatio="xMinYMin slice" className="w-full h-full block" role="img" aria-label="Model">
      <path d="M305 212 588 160" stroke="#00b400" />
      <path d="M50 603 1084 998" stroke="#b40000" />
      <path d="M50 150H292L322 323 50 396Z" fill="#c5bda0" stroke="#000" strokeWidth="2" />
      <text x="168" y="307" fontSize="38" fontWeight="500" fontFamily="'Noto Sans CJK KR', sans-serif" fill="#dc1414">완성!!</text>
      <path d="M170 627 704 396 704 403 186 630Z" fill="#c6c6c6" />
      <path d="M704 396 1305 510 1299 515 704 403Z" fill="#fff" stroke="#000" />
      <path d="M170 627 983 927 983 939 171 636Z" fill="#fff" stroke="#000" strokeWidth="2" />
      <path d="M983 927 1305 510 1304 517 984 939Z" fill="#bdbdbd" stroke="#000" strokeWidth="2" />
      <path d="M186 631 704 402 1299 515 983 927Z" fill="#46362e" stroke="#000" />
      <path d="M170 627 704 395.5 1306 509.5" fill="none" stroke="#000" strokeWidth="2" />
      <path d="M170 626 983 927 1306 509" fill="none" stroke="#000" strokeWidth="2.6" strokeLinejoin="round" />
      <path d="M984 930 1290 535" stroke="#555" strokeDasharray="1 1" />
    </svg>
  </main>
)

const PanelHeader: React.FC<{ title: string; closed?: boolean }> = ({ title, closed }) => (
  <div className="h-[18px] shrink-0 flex items-center pl-2 pr-[2px] border border-[#a9a9a9] border-b-0 bg-linear-to-b from-[#ececec] to-[#b4b4b4]">
    <svg viewBox="0 0 7 7" className="w-[7px] h-[7px] mr-[6px]" aria-hidden="true">
      <path d={closed ? 'M0 0V7L7 3.5Z' : 'M0 0H7L3.5 7Z'} fill="#000" />
    </svg>
    <h2 className="pb-[2px] text-[12px] leading-[14px] text-[#111]">{title}</h2>
    <button type="button" aria-label={`Close ${title}`} className="ml-auto w-[13px] h-[13px] flex items-center justify-center border border-[#a0a0a0] bg-[#e8e8e8]">
      <svg viewBox="0 0 5 5" className="w-[5px] h-[5px]" aria-hidden="true"><path d="M0 0 5 5M5 0 0 5" stroke="#000" strokeWidth="1.3" /></svg>
    </button>
  </div>
)

const DetailsIcon = () => (
  <svg viewBox="0 0 14 14" className="w-[14px] h-[14px]" aria-hidden="true">
    <path d="M6 0 14 7 6 14Z" fill="#000" />
    <path d="M.5 2.5H7.5V11.5H.5Z" fill="#fff" stroke="#333" />
    <path d="M1 3H7V6H1Z" fill="#2f8be6" />
    <path d="M2 8H6M2 10H6" stroke="#5b8fc0" />
  </svg>
)

const TagsPanel = () => (
  <section>
    <PanelHeader title="Tags" />
    <div className="h-[27px] flex items-center gap-2 pl-[6px] pr-[5px]">
      <button type="button" aria-label="Add tag">
        <svg viewBox="0 0 16 16" className="w-4 h-4 block" aria-hidden="true"><circle cx="8" cy="8" r="7" fill="#fff" stroke="#000" strokeWidth="1.3" /><path d="M8 4V12M4 8H12" stroke="#000" strokeWidth="1.8" /></svg>
      </button>
      <button type="button" aria-label="Delete tag">
        <svg viewBox="0 0 16 16" className="w-4 h-4 block" aria-hidden="true"><circle cx="8" cy="8" r="7" fill="none" stroke="#888" strokeWidth="1.2" /><path d="M4 8H12" stroke="#888" strokeWidth="1.4" /></svg>
      </button>
      <button type="button" aria-label="Details" className="ml-auto"><DetailsIcon /></button>
    </div>
    <div className="h-[181px] bg-white">
      <table className="w-full table-fixed text-[11px] leading-4 text-black text-left">
        <thead>
          <tr className="h-6">
            <th className="w-6 border-r border-[#e0e0e0]" />
            <th className="w-[88px] pl-[5px] font-normal border-r border-[#e0e0e0]">
              <span className="flex items-center gap-3">
                Name
                <span className="w-[14px] h-[14px] flex items-center justify-center bg-[#f0f0f0]">
                  <svg viewBox="0 0 8 7" className="w-2 h-[7px]" aria-hidden="true"><path d="M0 .5H8M1 1 4 6.5V3" fill="none" stroke="#888" /></svg>
                </span>
              </span>
            </th>
            <th className="w-6 border-r border-[#e0e0e0]" />
            <th className="pl-[5px] font-normal border-r border-[#e0e0e0]">Dashes</th>
            <th className="w-6 border-r border-[#e0e0e0]" />
            <th className="w-[3px]" />
          </tr>
        </thead>
        <tbody>
          <tr className="h-5">
            <td className="pl-[3px]">
              <svg viewBox="0 0 13 9" className="w-[13px] h-[9px]" aria-hidden="true"><path d="M0 5Q6-2 13 5 6 11 0 5Z" fill="#fff" stroke="#111" strokeWidth="1.1" /><circle cx="6.5" cy="4.5" r="2.6" fill="#111" /></svg>
            </td>
            <td className="pl-[3px]">Untagged</td>
            <td><span className="block w-[17px] h-[17px] ml-[3px] bg-[#ff5555]" /></td>
            <td>Default</td>
            <td className="pl-1">
              <svg viewBox="0 0 12 12" className="w-3 h-3" aria-hidden="true"><path d="M3 9 11 1" stroke="#555" strokeWidth="2.6" /><path d="M3 9 11 1" stroke="#c03a3a" strokeWidth="1.8" /><path d="M0 12 3 9" stroke="#444" strokeWidth="1.6" /></svg>
            </td>
            <td />
          </tr>
        </tbody>
      </table>
    </div>
  </section>
)

interface Swatch {
  name: string
  color: string
  corner?: boolean
  selected?: boolean
}

const swatches: Swatch[] = [
  { name: 'Brown', color: '#5d4b3d', corner: true },
  { name: 'Slate', color: '#64647a', corner: true },
  { name: 'Khaki', color: '#a0865c', corner: true },
  { name: 'Deep blue', color: '#263c4c', corner: true },
  { name: 'Crimson', color: '#a51c26', corner: true },
  { name: 'Maroon', color: '#561116', corner: true },
  { name: 'Clay', color: '#94684a', corner: true },
  { name: 'Rose beige', color: '#d1b7a9', corner: true },
  { name: 'Red', color: '#ff0000' },
  { name: 'Green', color: '#00ff00' },
  { name: 'Salmon', color: '#ff8484' },
  { name: 'Material3', color: '#90ff8c', corner: true, selected: true },
  { name: 'Charcoal', color: '#404040' },
  { name: 'Cream', color: '#fff5d6', corner: true },
]

const Corner = () => (
  <svg viewBox="0 0 9 9" className="w-[9px] h-[9px]" aria-hidden="true"><path d="M.5 8.5H8.5V.5Z" fill="#f2f2f2" stroke="#bbb" strokeWidth="0.7" /></svg>
)

const MaterialsPanel = () => (
  <section className="flex-1 min-h-0 flex flex-col mt-px">
    <PanelHeader title="Materials" />
    <div className="h-[76px] flex pt-[2px] pl-[2px] border-b border-[#a0a0a0]">
      <div className="w-[66px] h-[71px] py-[2px] border border-[#a0a0a0]">
        <div className="h-[65px] flex items-end justify-end p-[2px] bg-[#90ff8c]"><Corner /></div>
      </div>
      <input type="text" aria-label="Material name" defaultValue="Material3" className="w-[158px] h-5 ml-[3px] px-[2px] pb-px border border-[#7a7a7a] bg-white text-[11px] text-black" />
      <div className="ml-auto mr-px w-[24px] flex flex-col items-center gap-[6px] pt-px">
        <button type="button" aria-label="Show secondary pane">
          <svg viewBox="0 0 11 16" className="w-[11px] h-4 block" aria-hidden="true"><path d="M.5.5H10.5V7H.5Z" fill="#fff" stroke="#333" /><path d="M2 2H9L5.5 6ZM0 7H11V16H0Z" fill="#000" /><path d="M5.5 9V14M3 11.5H8" stroke="#fff" strokeWidth="1.5" /></svg>
        </button>
        <button type="button" aria-label="Create material">
          <svg viewBox="0 0 18 19" className="w-[18px] h-[19px] block" aria-hidden="true"><path d="M2 5 8 1 17 3V12L11 18 2 14Z" fill="#222" stroke="#000" /><path d="M3 5 8 2 16 4 10 7ZM11 9 16 5M11 13 16 9" stroke="#d9cfa0" strokeWidth="1.2" fill="#665" /><circle cx="5.5" cy="13.5" r="4.5" fill="#fff" stroke="#000" /><path d="M5.5 11V16M3 13.5H8" stroke="#000" strokeWidth="1.2" /></svg>
        </button>
        <svg viewBox="0 0 22 22" className="w-[22px] h-[22px]" aria-hidden="true"><path d="M0 0H22V22Z" fill="#fff" /><path d="M0 0 22 22H0Z" fill="#a4b2bc" /></svg>
      </div>
    </div>
    <div className="h-[27px] flex items-end text-[11px] leading-4 text-black">
      <button type="button" className="w-[45px] h-[22px] pb-[2px] pr-1 bg-white border-r border-[#dcdcdc]">Select</button>
      <button type="button" className="w-[38px] h-5 pb-px pr-3 border border-[#dcdcdc] border-l-0 border-b-0">Edit</button>
      <button type="button" aria-label="Sample paint" className="ml-auto mr-[5px] mb-[5px]">
        <svg viewBox="0 0 16 16" className="w-4 h-4" aria-hidden="true"><path d="M10 6 3 13" stroke="#444" strokeWidth="2.8" /><path d="M9.5 6.5 4 12" stroke="#ddd" strokeWidth="1.3" /><path d="M1 15 4 12" stroke="#e2a41c" strokeWidth="2.4" /><path d="M9 4 12 7M11 5 14 2" stroke="#222" strokeWidth="3" strokeLinecap="round" /></svg>
      </button>
    </div>
    <div className="h-[30px] ml-[3px] flex items-center pl-2 pr-[4px] border-t border-[#dcdcdc] border-b border-b-[#a0a0a0]">
      <button type="button" aria-label="Back" className="pb-[3px]">
        <svg viewBox="0 0 13 12" className="w-[13px] h-3 block" aria-hidden="true"><path d="M1 6 6 1V4H12V8H6V11Z" fill="#fff" stroke="#000" strokeWidth="1.2" /></svg>
      </button>
      <button type="button" aria-label="Forward" className="ml-[10px] pb-[3px]">
        <svg viewBox="0 0 13 12" className="w-[13px] h-3 block" aria-hidden="true"><path d="M12 6 7 1V4H1V8H7V11Z" fill="#fff" stroke="#999" strokeWidth="1.2" /></svg>
      </button>
      <button type="button" aria-label="In Model" className="ml-[10px] pb-[3px]">
        <svg viewBox="0 0 16 16" className="w-4 h-4 block" aria-hidden="true"><path d="M3 8V15H13V8L8 2Z" fill="#fff" stroke="#000" strokeWidth="1.2" /><path d="M0 9 8 1 16 9M3 5V1H5V4" fill="none" stroke="#000" strokeWidth="1.2" /><path d="M6 9H10V15H6Z" fill="#000" /></svg>
      </button>
      <div className="grid items-center ml-[5px] mt-[5px]">
        <select aria-label="Library" className="col-start-1 row-start-1 appearance-none w-[154px] h-6 pl-1 pb-[2px] border border-[#7a7a7a] bg-white text-[11px] text-black">
          <option>In Model</option>
        </select>
        <svg viewBox="0 0 9 6" className="col-start-1 row-start-1 justify-self-end w-[9px] h-[6px] mr-1 pointer-events-none" aria-hidden="true"><path d="M0 0 4.5 5 9 0" fill="none" stroke="#444" /></svg>
      </div>
      <button type="button" aria-label="Details" className="ml-auto pb-[3px]"><DetailsIcon /></button>
    </div>
    <div className="flex-1 bg-white pl-[6px] pt-px">
      <div className="grid grid-cols-[repeat(7,34px)] gap-[2px]">
        {swatches.map((swatch) => (
          <button
            key={swatch.name}
            type="button"
            aria-label={swatch.name}
            className={
              swatch.selected
                ? 'h-[34px] p-px border border-[#a0a0a0] outline-2 outline-[#0a74d2] bg-white'
                : 'h-[34px] p-px border border-[#a0a0a0] bg-white'
            }
          >
            <span className="w-full h-full flex items-end justify-end p-px" style={{ backgroundColor: swatch.color }}>
              {swatch.corner && <Corner />}
            </span>
          </button>
        ))}
      </div>
    </div>
  </section>
)

const Tray = () => (
  <aside className="w-[278px] shrink-0 pl-1 flex flex-col bg-[#f0f0f0]">
    <div className="h-[18px] shrink-0 flex items-center pl-1 pr-1 bg-linear-to-b from-[#bccbdb] to-[#d5e3f1]">
      <h2 className="text-[11px] leading-4 text-black">Default Tray</h2>
      <button type="button" aria-label="Pin" className="ml-auto mr-[9px]">
        <svg viewBox="0 0 7 9" className="w-[7px] h-[9px]" aria-hidden="true"><path d="M1.5 5V.5H5.5V5M4.5 1V5M0 5.5H7M3.5 6V9" fill="none" stroke="#000" /></svg>
      </button>
      <button type="button" aria-label="Close tray" className="w-3 h-3 flex items-center justify-center bg-[#c75050]">
        <svg viewBox="0 0 5 5" className="w-[5px] h-[5px]" aria-hidden="true"><path d="M0 0 5 5M5 0 0 5" stroke="#fff" strokeWidth="1.5" /></svg>
      </button>
    </div>
    <div className="flex-1 min-h-0 flex">
      <div className="flex-1 min-w-0 flex flex-col pt-[2px]">
        <div className="h-[106px] bg-white" />
        <div className="h-1 border-y border-[#b0b0b0]" />
        <TagsPanel />
        <div className="h-[5px] mt-[2px] mb-px border border-[#b0b0b0]" />
        <PanelHeader title="Shadows" closed />
        <MaterialsPanel />
        <div className="h-1 border-y border-[#b0b0b0]" />
        <PanelHeader title="Soften Edges" />
      </div>
      <div className="w-[17px] flex flex-col items-center justify-between pt-2">
        <svg viewBox="0 0 8 7" className="w-2 h-[7px]" aria-hidden="true"><path d="M0 6 4 2 8 6" fill="none" stroke="#555" strokeWidth="2" /></svg>
        <span className="w-[15px] h-[17px] mb-[136px] bg-[#cdcdcd]" />
      </div>
    </div>
  </aside>
)

const App: React.FC = () => {
  return (
    <div className="h-screen flex flex-col overflow-hidden bg-[#f0f0f0] font-['Noto_Sans_CJK_KR','Noto_Sans',sans-serif]">
      <TitleBar />
      <nav className="h-[18px] shrink-0 flex items-center pl-px bg-white text-[12px] leading-[18px] text-black">
        {menus.map(([before, key, after]) => (
          <button key={before + key + after} type="button" className="px-[6px]">
            {before}<span className="underline">{key}</span>{after}
          </button>
        ))}
      </nav>
      <div className="shrink-0 pt-[2px]">
        <div className="flex">
          <ShadowBar />
          <TagBar />
          <ToolSet tools="pencil freehand rectangle rotated circle polygon arc2 arc arc3 pie" />
          <ToolSet tools="xray backedges | wireframe hidden shaded *textured monochrome" />
          <ToolSet tools="outerShell | intersect union subtract trim split" />
          <ToolSet tools="wrench road pathCursor frame" />
        </div>
        <div className="flex">
          <ToolSet tools="sheet sheetBlue turnLeft turnRight cornerArrow spread" />
          <ToolSet tools="academy refresh camera | plus tree palette globe cloud | gears | mail info" />
          <ToolSet tools="contours scratch | smoove stamp drape detail flip" />
          <ToolSet tools="greenOpen greenFill greenCube greenTwin | redOpen redFill redCube redTwin" />
        </div>
        <div className="flex">
          <ToolSet tools="select | eraser pencil ^ arc ^ rectangle ^ | pushpull offset move rotate scale | tape label paint | orbit hand zoom extents | warehouse components sendLayout | ruby | account ^" />
          <ToolSet tools="warehouse share shareGrey components" />
          <ToolSet tools="isoHouse topHouse frontHouse rightHouse backHouse leftHouse" />
          <ToolSet tools="locator" />
        </div>
      </div>
      <div className="flex-1 min-h-0 flex">
        <Palette />
        <div className="flex-1 min-w-0 flex flex-col">
          <div className="h-[21px] flex items-end pl-[2px] border-b border-[#d4d4d4] text-[13px] text-black">
            <button type="button" className="w-14 h-[19px] leading-4 pb-px bg-[#f3f3f3] border border-[#dcdcdc] border-b-0">Scene 1</button>
            <button type="button" className="w-[61px] h-5 leading-4 pb-[2px] bg-white border border-[#dcdcdc] border-b-0">Scene 2</button>
          </div>
          <div className="h-1 bg-white" />
          <div className="flex-1 min-h-0 flex">
            <Viewport />
            <Tray />
          </div>
        </div>
      </div>
    </div>
  )
}

export default App
